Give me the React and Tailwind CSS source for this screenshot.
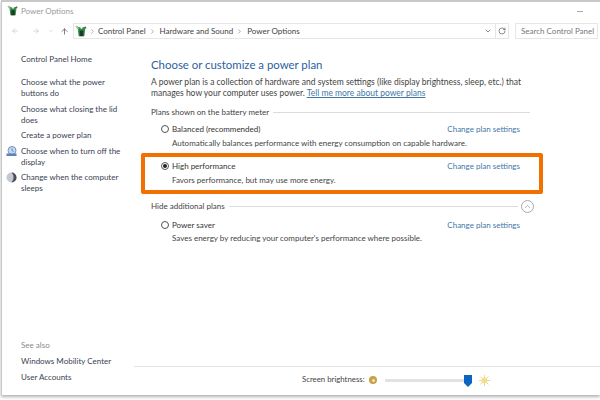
import React from 'react';
import { ArrowLeft, ArrowRight, ArrowUp, ChevronDown, ChevronRight, ChevronUp, RotateCw } from 'lucide-react';

const PowerIcon = ({ size = 14 }) => (
  <svg width={size} height={size} viewBox="0 0 14 14">
    <path d="M3 4h8l-1 8H4z" fill="#2f8f46" />
    <path d="M2 2.5l4 1.5M12 2.5L8 4" stroke="#3d7a3f" strokeWidth="2" />
    <rect x="5" y="6" width="4" height="6" fill="#1f3b2a" />
    <path d="M1 1l3 3" stroke="#9ccf8f" strokeWidth="1.5" />
  </svg>
);

const DisplayIcon = () => (
  <svg className="absolute -left-[15px] top-0" width="11" height="11" viewBox="0 0 11 11">
    <circle cx="6" cy="4.5" r="4" fill="#c6d8ee" stroke="#6f93c4" />
    <path d="M6 2.5v2l1.5 1" stroke="#44628f" strokeWidth="0.7" fill="none" />
    <path d="M0.5 7.5h10v2.5h-10z" fill="#5f82b5" />
  </svg>
);

const SleepIcon = () => (
  <svg className="absolute -left-[15px] top-0" width="11" height="11" viewBox="0 0 11 11">
    <circle cx="5.5" cy="5.5" r="5" fill="#c3c8d2" />
    <path d="M5.5.5a5 5 0 0 1 0 10a7 7 0 0 0 0-10z" fill="#4a4d55" />
  </svg>
);

const SideLink = ({ children, icon }) => (
  <div className="relative text-[#3a4252] leading-[11px] whitespace-nowrap">
    {icon}
    {children}
  </div>
);

const Radio = ({ checked }) => (
  <span className="w-[8px] h-[8px] rounded-full border border-[#555] flex items-center justify-center mr-[3px] shrink-0 bg-white">
    {checked && <span className="w-[4px] h-[4px] rounded-full bg-[#222]" />}
  </span>
);

const Plan = ({ name, desc, checked, tight }) => (
  <div className="whitespace-nowrap">
    <div className="flex justify-between items-center h-[14px]">
      <div className="flex items-center pl-[10px] text-[#333]">
        <Radio checked={checked} />
        {name}
      </div>
      <span className="text-[#3f78a8] mr-[12px]">Change plan settings</span>
    </div>
    <div className={`pl-[21px] h-[14px] leading-[14px] text-[#444] ${tight ? '-mt-px' : ''}`}>{desc}</div>
  </div>
);

const SectionHead = ({ children, toggle }) => (
  <div className="flex items-center text-[#444] h-[14px] whitespace-nowrap">
    <span>{children}</span>
    <span className={`flex-1 h-px bg-[#dcdcdc] ml-[4px] ${toggle ? '' : 'mr-[2px]'}`} />
    {toggle && (
      <span className="w-[13px] h-[13px] rounded-full border border-[#a9a9a9] flex items-center justify-center ml-[3px] -mr-[2px]">
        <ChevronUp size={9} color="#777" strokeWidth={1.5} />
      </span>
    )}
  </div>
);

export default function App() {
  return (
    <div className="w-[600px] h-[400px] bg-white overflow-hidden text-[8px] font-['Lato',sans-serif]">
      <div className="ml-[1px] h-[395px] border-t-2 border-l border-[#c8c8c8] shadow-[0_2px_3px_rgba(0,0,0,0.3)] flex flex-col bg-white">
        {/* title bar */}
        <div className="h-[18px] flex items-center justify-between pl-[5px] pr-[17px] text-[#9a9a9a] whitespace-nowrap">
          <div className="flex items-center gap-[2px]">
            <PowerIcon size={12} />
            <span>Power Options</span>
          </div>
          <span className="w-[6px] h-px bg-[#aaa]" />
        </div>

        {/* address bar */}
        <div className="h-[16px] mt-[3px] flex items-center pl-[9px] pr-[2px] text-[#444] whitespace-nowrap">
          <ArrowLeft size={8} color="#c4c4c4" />
          <ArrowRight size={8} color="#c4c4c4" className="ml-[13px]" />
          <ChevronDown size={6} color="#c4c4c4" className="ml-[8px]" />
          <ArrowUp size={9} color="#555" className="ml-[6px]" />
          <div className="ml-[4px] w-[423px] h-[16px] border border-[#e6e6e6] flex items-center pl-[1px] pr-[3px]">
            <PowerIcon size={13} />
            <ChevronRight size={7} color="#777" className="ml-[1px]" />
            <span className="ml-[2px]">Control Panel</span>
            <ChevronRight size={7} color="#777" className="ml-[3px]" />
            <span className="ml-[4px]">Hardware and Sound</span>
            <ChevronRight size={7} color="#777" className="ml-[3px]" />
            <span className="ml-[4px]">Power Options</span>
            <ChevronDown size={8} color="#555" className="ml-auto" />
          </div>
          <div className="w-[13px] h-[16px] border-y border-r border-[#e6e6e6] flex items-center justify-center">
            <RotateCw size={8} color="#555" />
          </div>
          <div className="ml-[6px] flex-1 h-[16px] border border-[#e6e6e6] flex items-center pl-[5px] text-[#777]">
            Search Control Panel
          </div>
        </div>

        <div className="flex-1 flex min-h-0">
          {/* sidebar */}
          <div className="w-[132px] shrink-0 pl-[19px] pt-[15px] pb-[12px] flex flex-col justify-between">
            <div className="flex flex-col">
              <div className="text-[#3a4252] leading-[11px] mb-[12px]">Control Panel Home</div>
              <div className="flex flex-col gap-[4.5px]">
                <SideLink>Choose what the power<br />buttons do</SideLink>
                <SideLink>Choose what closing the lid<br />does</SideLink>
                <SideLink>Create a power plan</SideLink>
                <SideLink icon={<DisplayIcon />}>Choose when to turn off the<br />display</SideLink>
                <SideLink icon={<SleepIcon />}>Change when the computer<br />sleeps</SideLink>
              </div>
            </div>
            <div className="flex flex-col gap-[5px] leading-[11px] whitespace-nowrap">
              <div className="text-[#8a8a8a]">See also</div>
              <div className="text-[#3a4252]">Windows Mobility Center</div>
              <div className="text-[#3a4252]">User Accounts</div>
            </div>
          </div>

          {/* main */}
          <div className="flex-1 flex flex-col min-w-0">
            <div className="flex-1 pl-[17px] pr-[68px] pt-[18px]">
              <div className="text-[11.4px] leading-[15px] text-[#2b5f9e] whitespace-nowrap">Choose or customize a power plan</div>
              <div className="mt-[5px] text-[8.5px] leading-[11px] text-[#444] whitespace-nowrap">
                A power plan is a collection of hardware and system settings (like display brightness, sleep, etc.) that<br />
                manages how your computer uses power. <span className="text-[#3f78a8] underline">Tell me more about power plans</span>
              </div>
              <div className="mt-[6px]">
                <SectionHead>Plans shown on the battery meter</SectionHead>
              </div>
              <div className="mt-[3px]">
                <Plan name="Balanced (recommended)" desc="Automatically balances performance with energy consumption on capable hardware." />
              </div>
              <div className="mt-[3px] -ml-[10px] -mr-[11px] pl-[6px] pr-[7px] border-[4px] border-[#f07000] rounded-[2px] h-[41px] pt-[2px]">
                <Plan name="High performance" desc="Favors performance, but may use more energy." checked />
              </div>
              <div className="mt-[5px]">
                <SectionHead toggle>Hide additional plans</SectionHead>
              </div>
              <div className="mt-[5px]">
                <Plan name="Power saver" desc="Saves energy by reducing your computer's performance where possible." tight />
              </div>
            </div>

            {/* brightness */}
            <div className="h-[29px] pb-[2px] border-t border-[#e4e4e4] flex items-center pl-[168px] text-[7.8px] text-[#444] whitespace-nowrap">
              <span className="w-[63px]">Screen brightness:</span>
              <span className="ml-[4px] w-[8px] h-[8px] rounded-full bg-[#c8a04a] flex items-center justify-center">
                <span className="w-[3px] h-[3px] rounded-full bg-[#f4e4bb]" />
              </span>
              <div className="ml-[8px] w-[86px] h-[3px] bg-[#e2e2e2] relative">
                <svg className="absolute left-[79px] -top-[4px]" width="8" height="12" viewBox="0 0 8 12">
                  <path d="M0 0h8v8l-4 4-4-4z" fill="#0a64c0" />
                </svg>
              </div>
              <svg className="ml-[8px]" width="11" height="11" viewBox="0 0 11 11">
                <g stroke="#e4d9a0" strokeWidth="1">
                  <path d="M5.5 0v11M0 5.5h11M1.6 1.6l7.8 7.8M9.4 1.6L1.6 9.4" />
                </g>
                <circle cx="5.5" cy="5.5" r="3" fill="#f2e08c" />
              </svg>
            </div>
          </div>
        </div>
      </div>
    </div>
  );
}
